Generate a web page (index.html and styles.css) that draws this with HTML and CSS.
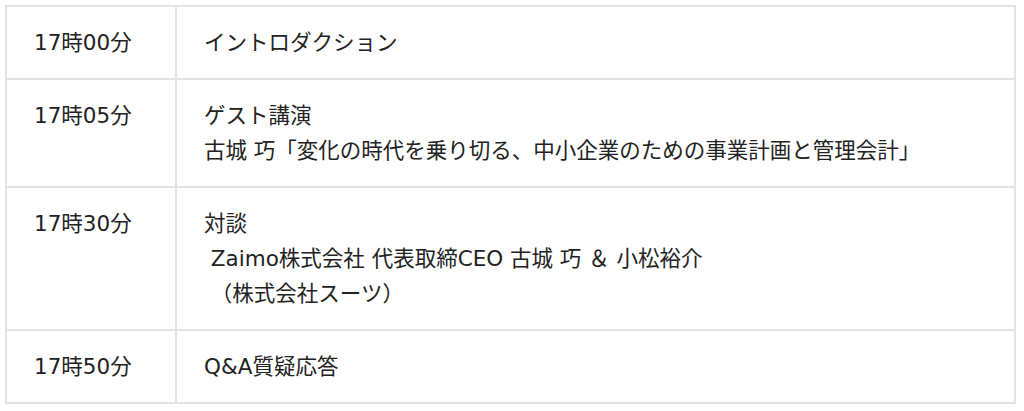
FILE: index.html
```html
<!DOCTYPE html>
<html lang="ja">
<head>
<meta charset="utf-8">
<title>タイムテーブル</title>
<link rel="stylesheet" href="styles.css">
</head>
<body>
<table class="schedule">
  <tbody>
    <tr>
      <td class="time">17時00分</td>
      <td class="desc">イントロダクション</td>
    </tr>
    <tr>
      <td class="time">17時05分</td>
      <td class="desc">ゲスト講演<br>古城 巧「変化の時代を乗り切る、中小企業のための事業計画と管理会計」</td>
    </tr>
    <tr>
      <td class="time">17時30分</td>
      <td class="desc">対談<br>&nbsp;Zaimo株式会社 代表取締CEO 古城 巧 ＆ 小松裕介<br>&nbsp;（株式会社スーツ）</td>
    </tr>
    <tr>
      <td class="time">17時50分</td>
      <td class="desc">Q&amp;A質疑応答</td>
    </tr>
  </tbody>
</table>
</body>
</html>
```

FILE: styles.css
```css
html, body {
  background: #ffffff;
}
body {
  margin: 5px 0 0 5px;
  font-family: "DejaVu Sans", "Noto Sans CJK JP", sans-serif;
  font-size: 21.5px;
  font-weight: 400;
  color: #222222;
}
.schedule {
  width: 1011px;
  border-collapse: collapse;
  border: 2px solid #e3e3e3;
}
.schedule td {
  border: 2px solid #e3e3e3;
  padding: 18px 27px 18px;
  line-height: 35px;
  vertical-align: top;
  text-align: left;
}
.schedule .time {
  width: 114px;
  white-space: nowrap;
}
```
